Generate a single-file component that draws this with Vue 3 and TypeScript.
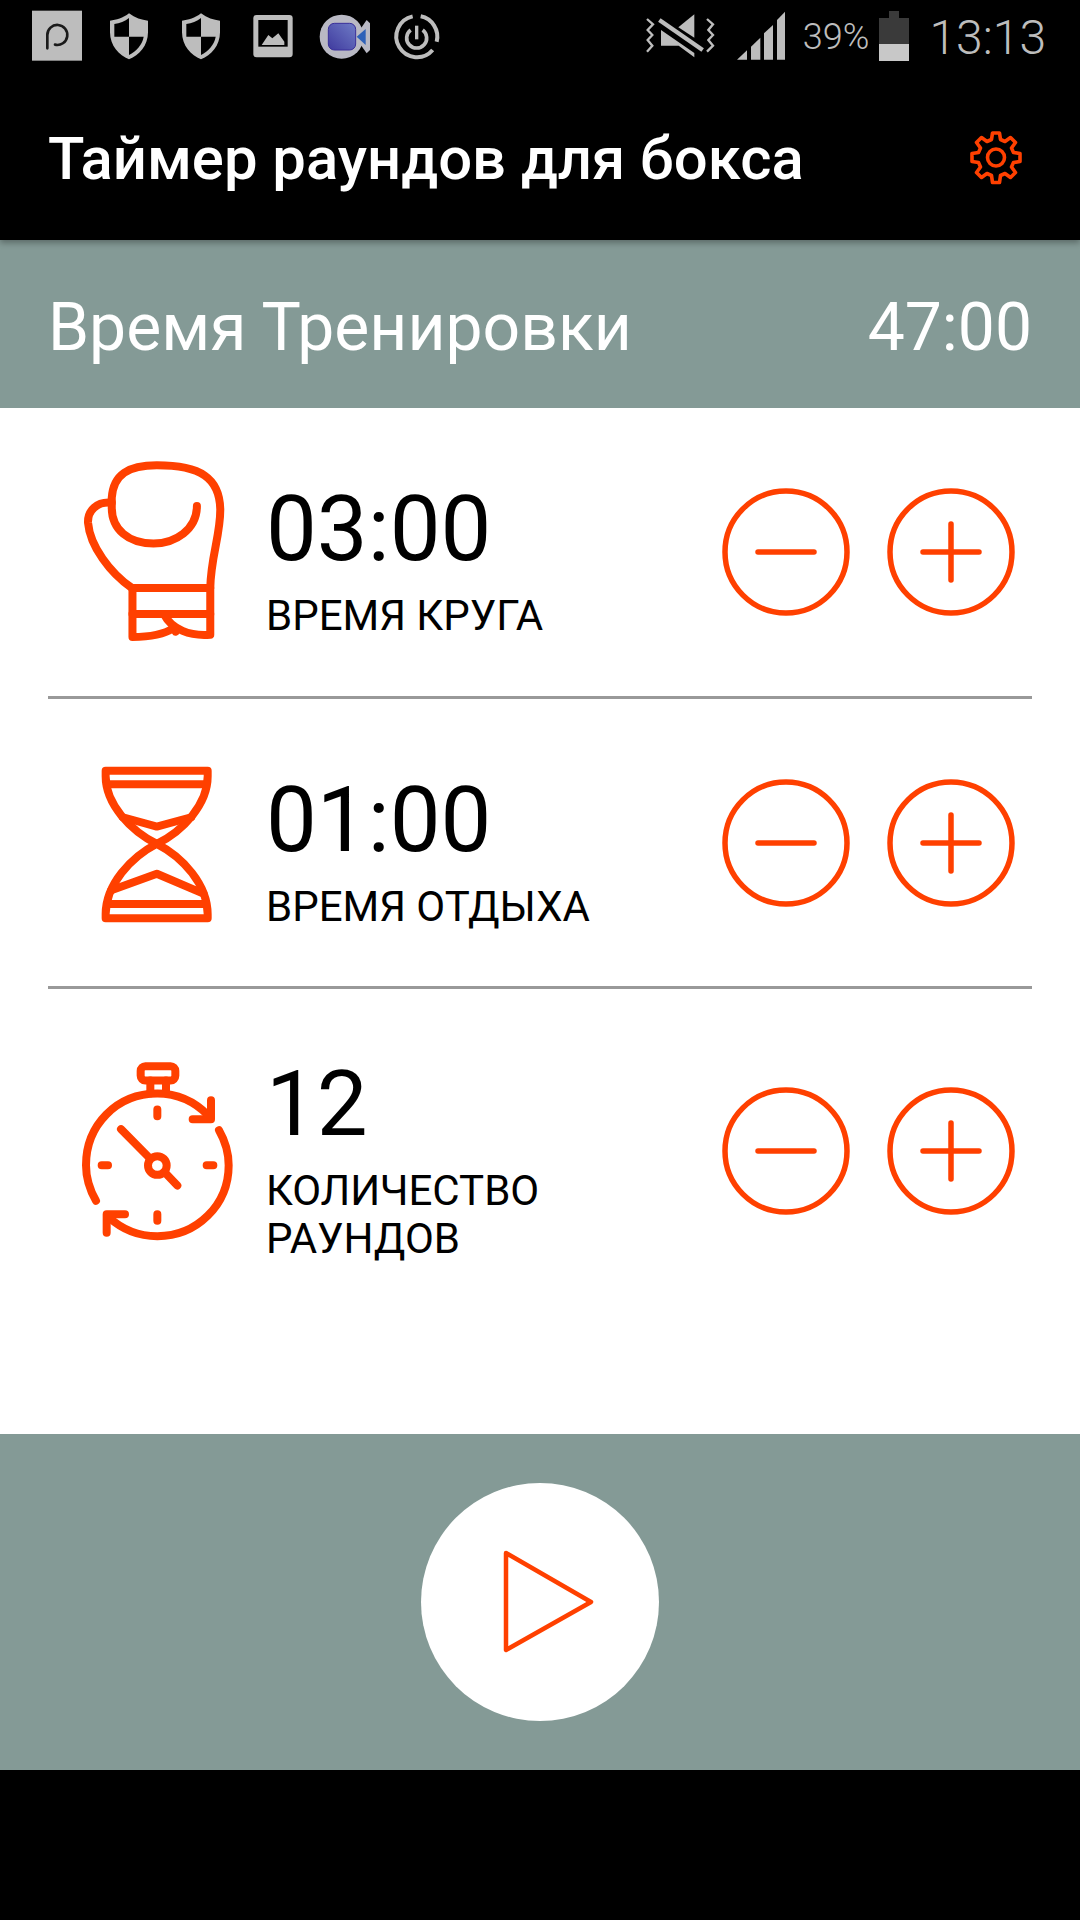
<script setup lang="ts">
interface TimerRow {
  id: string;
  value: string;
  label: string;
}

const rows: TimerRow[] = [
  { id: 'round', value: '03:00', label: 'ВРЕМЯ КРУГА' },
  { id: 'rest', value: '01:00', label: 'ВРЕМЯ ОТДЫХА' },
  { id: 'count', value: '12', label: 'КОЛИЧЕСТВО РАУНДОВ' },
];
</script>

<template>
  <div class="screen">
    <div class="status-bar">
      <svg class="status-left" viewBox="0 0 1335 216" width="445" height="72">
        <defs>
          <linearGradient id="cam" x1="1" y1="0" x2="0" y2="1">
            <stop offset="0" stop-color="#6f7cc6" />
            <stop offset="1" stop-color="#3f3a9e" />
          </linearGradient>
        </defs>
        <rect x="96" y="32" width="150" height="150" fill="#bdbdbd" />
        <path d="M142 145 L142 105 A30 30 0 1 1 165 134" fill="none" stroke="#1a1a1a" stroke-width="8" stroke-linecap="round" />
        <g v-for="x in [387, 603]" :key="x" :transform="`translate(${x} 2)`">
          <path d="M0 38 C-18 52 -38 58 -57 60 L-57 95 C-57 135 -30 165 0 176 C30 165 57 135 57 95 L57 60 C38 58 18 52 0 38 Z" fill="#bdbdbd" />
          <path d="M0 52 C-12 62 -28 68 -44 70 L-44 108 L0 108 Z" fill="#000" />
          <path d="M0 108 L44 108 C40 132 22 152 0 163 Z" fill="#000" />
        </g>
        <rect x="760" y="45" width="118" height="127" rx="10" fill="#bdbdbd" />
        <rect x="775" y="60" width="88" height="80" fill="#000" />
        <path d="M785 135 L805 105 L817 115 L835 100 L853 125 L853 135 Z" fill="#bdbdbd" />
        <circle cx="1025" cy="110" r="66" fill="#b9b9c4" />
        <path d="M1065 110 L1100 60 L1110 70 L1110 150 L1100 160 Z" fill="#b9b9c4" />
        <rect x="985" y="70" width="82" height="80" rx="18" fill="url(#cam)" stroke="#3a2f9a" stroke-width="3" />
        <path d="M1070 110 L1097 87 L1097 135 Z" fill="#2f62b8" />
        <path d="M1262 49 A62 62 0 0 1 1310 125 M1298 150 A62 62 0 1 1 1238 49" fill="none" stroke="#bdbdbd" stroke-width="12" />
        <path d="M1268 90 A30 30 0 1 1 1232 90" fill="none" stroke="#bdbdbd" stroke-width="11" />
        <path d="M1250 77 L1250 118" stroke="#bdbdbd" stroke-width="10" />
      </svg>
      <div class="status-right">
        <svg class="sound-signal" viewBox="0 0 480 180" width="160" height="60">
          <g fill="#bdbdbd">
            <path d="M142 67 L190 28 L190 98 Z" />
            <path d="M90 75 L90 122 L143 122 L190 157 L190 144 Z" />
            <path d="M318 164 L348 136 L348 164 Z" />
            <path d="M360 164 L360 125 L388 98 L388 164 Z" />
            <path d="M399 164 L399 85 L426 60 L426 164 Z" />
            <path d="M438 164 L438 45 L462 20 L462 164 Z" />
          </g>
          <path d="M85 45 L215 135" stroke="#bdbdbd" stroke-width="13" />
          <path d="M48 42 L66 58 L50 75 L64 90 L50 105 L64 122 L48 140 M228 42 L246 58 L232 75 L246 90 L232 105 L246 122 L228 140" fill="none" stroke="#bdbdbd" stroke-width="7" />
        </svg>
        <span class="battery-text">39%</span>
        <svg class="battery" viewBox="0 0 30 50" width="30" height="50">
          <rect x="10" y="0" width="10" height="7" fill="#3a3a3a" />
          <rect x="0" y="7" width="30" height="43" fill="#3a3a3a" />
          <rect x="0" y="33" width="30" height="17" fill="#c8c8c8" />
        </svg>
        <span class="clock">13:13</span>
      </div>
    </div>

    <header class="app-bar">
      <h1 class="title">Таймер раундов для бокса</h1>
      <svg class="gear" viewBox="0 0 54 56" width="54" height="56">
        <path
          d="M23.5 3 L30.5 3 L31.5 9.5 L36 11.5 L41.5 7.5 L46.5 12.5 L42.5 18 L44.5 22.5 L51 23.5 L51 31.5 L44.5 32.5 L42.5 37 L46.5 42.5 L41.5 47.5 L36 43.5 L31.5 45.5 L30.5 52.5 L23.5 52.5 L22.5 45.5 L18 43.5 L12.5 47.5 L7.5 42.5 L11.5 37 L9.5 32.5 L3 31.5 L3 23.5 L9.5 22.5 L11.5 18 L7.5 12.5 L12.5 7.5 L18 11.5 L22.5 9.5 Z"
          fill="none" stroke="#ff4000" stroke-width="3.6" stroke-linejoin="round"
        />
        <circle cx="27" cy="27.5" r="8.5" fill="none" stroke="#ff4000" stroke-width="3.6" />
      </svg>
    </header>

    <section class="summary">
      <span>Время Тренировки</span>
      <span>47:00</span>
    </section>

    <main class="settings">
      <div v-for="row in rows" :key="row.id" class="row" :class="`row-${row.id}`">
        <div class="row-icon">
          <svg v-if="row.id === 'round'" class="glove" viewBox="60 50 440 560" width="147" height="187">
            <g fill="none" stroke="#ff4000" stroke-width="24" stroke-linecap="round" stroke-linejoin="round">
              <path d="M410 200 C410 270 345 312 280 312 C205 312 155 270 155 205 L155 175 C160 105 205 78 290 78 C420 78 478 115 480 210 C480 290 452 350 450 445" />
              <path d="M155 190 C110 185 82 215 84 250 C90 320 150 400 215 445" />
              <path d="M217 445 L450 445 L450 585 C390 590 335 570 312 525" />
              <path d="M217 445 L217 592 C265 592 310 585 340 565 L346 576" />
              <path d="M217 523 L450 523" />
            </g>
          </svg>
          <svg v-else-if="row.id === 'rest'" class="hourglass" viewBox="55 35 355 490" width="118" height="163">
            <g fill="none" stroke="#ff4000" stroke-width="24" stroke-linecap="round" stroke-linejoin="round">
              <path d="M78 58 L385 58 L385 75 C385 160 310 240 232 278 C155 240 78 160 78 75 Z" />
              <path d="M232 278 C310 318 385 400 385 490 L385 502 L78 502 L78 490 C78 400 155 318 232 278 Z" />
              <path d="M82 99 L380 99" />
              <path d="M82 459 L380 459" />
              <path d="M130 198 L232 226 L335 198" />
              <path d="M95 418 L232 368 L372 428" />
            </g>
          </svg>
          <svg v-else class="watch" viewBox="60 30 465 545" width="155" height="182">
            <g fill="none" stroke="#ff4000" stroke-width="24" stroke-linecap="round" stroke-linejoin="round">
              <rect x="242" y="48" width="104" height="43" rx="14" />
              <path d="M271 91 L271 130 M318 91 L318 130" />
              <path d="M445 196 C400 150 350 130 292 130 C170 130 78 225 78 345 C78 385 90 420 108 452" />
              <path d="M477 240 C497 275 506 310 506 345 C506 465 410 558 292 558 C235 558 185 537 145 500" />
              <path d="M453 150 L453 207 L398 207" />
              <path d="M140 548 L140 492 L195 492" />
              <path d="M292 178 L292 198 M292 492 L292 512 M125 345 L144 345 M440 345 L460 345" />
              <circle cx="292" cy="346" r="28" />
              <path d="M183 237 L270 325 M314 366 L352 406" />
            </g>
          </svg>
        </div>
        <div class="row-text">
          <div class="value">{{ row.value }}</div>
          <div class="label">{{ row.label }}</div>
        </div>
        <div class="row-actions">
          <svg class="step" viewBox="0 0 128 128" width="128" height="128">
            <circle cx="64" cy="64" r="61" fill="none" stroke="#ff4000" stroke-width="5.5" />
            <path d="M36 64 L92 64" stroke="#ff4000" stroke-width="5.5" stroke-linecap="round" />
          </svg>
          <svg class="step" viewBox="0 0 128 128" width="128" height="128">
            <circle cx="64" cy="64" r="61" fill="none" stroke="#ff4000" stroke-width="5.5" />
            <path d="M36 64 L92 64 M64 36 L64 92" stroke="#ff4000" stroke-width="5.5" stroke-linecap="round" />
          </svg>
        </div>
      </div>
    </main>

    <section class="footer-band">
      <button class="play" type="button">
        <svg viewBox="0 0 92 106" width="92" height="106">
          <path d="M4 4 L89 53 L4 101 Z" fill="none" stroke="#ff4000" stroke-width="4.5" stroke-linejoin="round" />
        </svg>
      </button>
    </section>

    <div class="nav-space"></div>
  </div>
</template>

<style scoped>
.screen {
  width: 1080px;
  height: 1920px;
  display: flex;
  flex-direction: column;
  background: #fff;
  font-family: Roboto, "Noto Sans", sans-serif;
  overflow: hidden;
}

.status-bar {
  height: 72px;
  flex: none;
  display: flex;
  justify-content: space-between;
  background: #000;
}

.status-left {
  display: block;
}

.status-right {
  display: flex;
  align-items: flex-start;
  padding-right: 34px;
  color: #bdbdbd;
}

.sound-signal {
  margin-top: 5px;
}

.battery-text {
  margin: 16px 0 0 12px;
  font-size: 36px;
  line-height: 42px;
  font-weight: 300;
}

.battery {
  margin: 11px 0 0 10px;
}

.clock {
  margin: 10px 0 0 20px;
  font-size: 48px;
  line-height: 56px;
  font-weight: 300;
}

.app-bar {
  height: 168px;
  flex: none;
  display: flex;
  align-items: center;
  justify-content: space-between;
  padding: 5px 57px 0 48px;
  box-sizing: border-box;
  background: #000;
  position: relative;
  z-index: 1;
  box-shadow: 0 3px 6px rgba(0, 0, 0, 0.3);
}

.title {
  margin: 0;
  font-size: 59.8px;
  font-weight: 500;
  color: #fff;
}

.gear {
  margin-bottom: 1px;
}

.summary {
  height: 168px;
  flex: none;
  display: flex;
  align-items: center;
  justify-content: space-between;
  padding: 7px 48px 0 48px;
  box-sizing: border-box;
  background: #849a96;
  color: #fff;
  font-size: 66px;
}

.settings {
  flex: 1;
  padding: 0 48px;
}

.row {
  height: 290px;
  display: flex;
  align-items: center;
  border-bottom: 3px solid #999;
  box-sizing: border-box;
}

.row-round {
  height: 291px;
}

.row-count {
  height: 324px;
  border-bottom: none;
}

.row-icon {
  width: 218px;
  flex: none;
  display: flex;
  justify-content: center;
}

.glove {
  margin: 0 8px 5px 0;
}

.hourglass {
  margin-top: 3px;
}

.row-text {
  flex: 1;
  padding-top: 20px;
}

.value {
  font-size: 90.5px;
  line-height: 90px;
  color: #000;
}

.label {
  width: 300px;
  margin-top: 18px;
  font-size: 42px;
  line-height: 48px;
  color: #000;
}

.row-rest .label,
.row-round .label {
  width: auto;
}

.row-actions {
  display: flex;
  gap: 37px;
  margin-right: 17px;
}

.step {
  display: block;
}

.footer-band {
  height: 336px;
  flex: none;
  display: flex;
  align-items: center;
  justify-content: center;
  background: #849a96;
}

.play {
  width: 238px;
  height: 238px;
  display: flex;
  align-items: center;
  justify-content: center;
  padding: 0 0 0 16px;
  border: none;
  border-radius: 50%;
  background: #fff;
}

.nav-space {
  height: 150px;
  flex: none;
  background: #000;
}
</style>
